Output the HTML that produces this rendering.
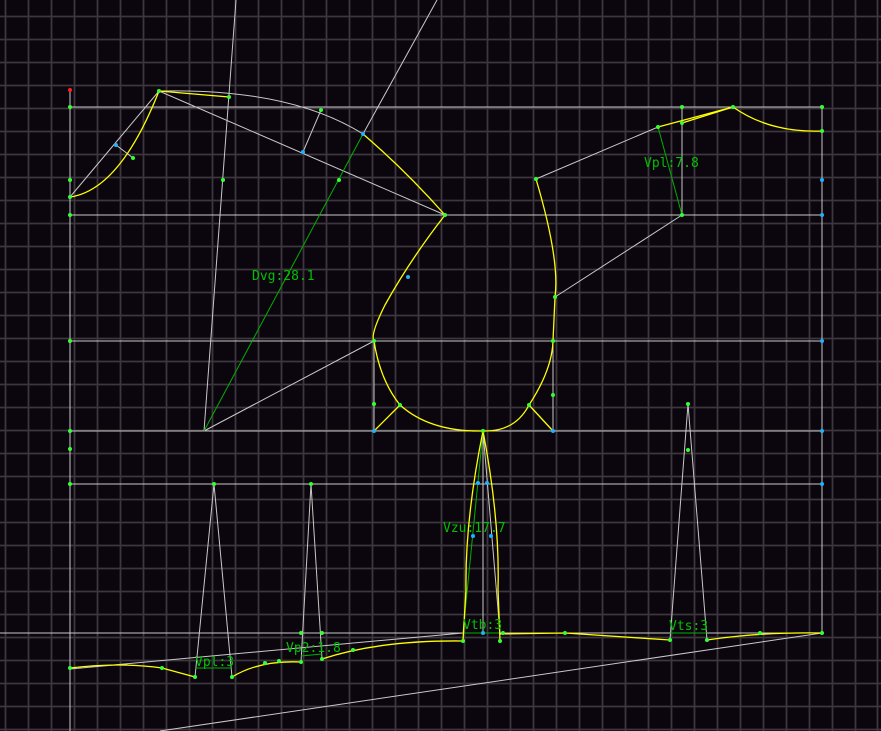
<!DOCTYPE html>
<html><head><meta charset="utf-8"><style>
html,body{margin:0;padding:0;background:#0b060e;}
svg{display:block}
text{font-family:"DejaVu Sans Mono","Liberation Mono",monospace;font-size:13px;fill:#00c000;}
</style></head><body>
<svg width="881" height="731" viewBox="0 0 881 731" xmlns="http://www.w3.org/2000/svg">
<rect width="881" height="731" fill="#0b060e"/>
<g id="grid" stroke="#3d363c" stroke-width="1.8"></g>
<g fill="none" stroke="#c8c8c8" stroke-width="1">
<line x1="70" y1="90" x2="70" y2="731"/>
<line x1="70" y1="107" x2="822" y2="107"/>
<line x1="70" y1="215" x2="822" y2="215"/>
<line x1="70" y1="341" x2="822" y2="341"/>
<line x1="70" y1="431" x2="822" y2="431"/>
<line x1="70" y1="484" x2="822" y2="484"/>
<line x1="0" y1="633" x2="822" y2="633"/>
<line x1="822" y1="107" x2="822" y2="633"/>
<line x1="236" y1="0" x2="204" y2="431"/>
<line x1="437" y1="0" x2="363" y2="134"/>
<line x1="70" y1="197" x2="159" y2="91"/>
<line x1="159" y1="91" x2="445" y2="215"/>
<line x1="204" y1="431" x2="374" y2="341"/>
<path d="M159,91 Q290,88 363,134"/>
<line x1="303" y1="152" x2="321" y2="110"/>
<line x1="116" y1="145" x2="133" y2="158"/>
<line x1="536" y1="179" x2="658" y2="127"/>
<line x1="682" y1="107" x2="682" y2="215"/>
<line x1="682" y1="215" x2="555" y2="297"/>
<line x1="374" y1="341" x2="374" y2="431"/>
<line x1="553" y1="341" x2="553" y2="431"/>
<line x1="214" y1="484" x2="195" y2="677"/>
<line x1="214" y1="484" x2="232" y2="677"/>
<line x1="311" y1="484" x2="301" y2="662"/>
<line x1="311" y1="484" x2="322" y2="659"/>
<line x1="483" y1="431" x2="483" y2="633"/>
<line x1="483" y1="431" x2="500" y2="633"/>
<line x1="688" y1="404" x2="670" y2="640"/>
<line x1="688" y1="404" x2="707" y2="640"/>
<line x1="160" y1="731" x2="822" y2="633"/>
<line x1="70" y1="669" x2="463" y2="633"/>
</g>
<g fill="none" stroke="#00b000" stroke-width="1">
<line x1="363" y1="134" x2="204" y2="431"/>
<line x1="658" y1="127" x2="682" y2="215"/>
<line x1="483" y1="431" x2="463" y2="633"/>
<line x1="195" y1="668" x2="232" y2="668"/>
<line x1="301" y1="656" x2="322" y2="654"/>
<line x1="463" y1="633" x2="500" y2="633"/>
<line x1="670" y1="633" x2="707" y2="633"/>
</g>
<g fill="none" stroke="#ffff00" stroke-width="1.3">
<path d="M70,197 Q120,190 159,91"/>
<line x1="159" y1="91" x2="229" y2="97"/>
<path d="M363,134 Q405,170 445,215"/>
<path d="M445,215 Q410,260 385,305 Q370,335 374,341"/>
<path d="M374,341 Q380,380 400,405 Q430,432 483,431 Q515,432 529,405 Q552,370 553,341"/>
<path d="M536,179 Q560,260 555,297 L553,341"/>
<line x1="374" y1="431" x2="400" y2="405"/>
<line x1="553" y1="431" x2="529" y2="405"/>
<line x1="658" y1="127" x2="733" y2="107"/>
<line x1="682" y1="123" x2="733" y2="107"/>
<path d="M733,107 Q770,133 822,131"/>
<path d="M483,431 Q465,520 466,589 L463,641"/>
<path d="M483,431 Q500,520 498,589 L500,641"/>
<path d="M70,668 Q120,662 162,668 L195,677"/>
<path d="M232,677 Q260,660 301,662"/>
<path d="M322,659 Q380,640 463,641"/>
<path d="M500,634 L565,633 L670,640"/>
<path d="M707,640 Q760,632 822,633"/>
</g>
<g fill="#33ff33">
<circle cx="70" cy="107" r="2"/><circle cx="70" cy="180" r="2"/><circle cx="70" cy="197" r="2"/><circle cx="70" cy="215" r="2"/>
<circle cx="70" cy="341" r="2"/><circle cx="70" cy="431" r="2"/><circle cx="70" cy="449" r="2"/><circle cx="70" cy="484" r="2"/><circle cx="70" cy="668" r="2"/>
<circle cx="159" cy="91" r="2"/><circle cx="229" cy="97" r="2"/><circle cx="223" cy="180" r="2"/><circle cx="321" cy="110" r="2"/><circle cx="133" cy="158" r="2"/>
<circle cx="339" cy="180" r="2"/><circle cx="445" cy="215" r="2"/><circle cx="374" cy="341" r="2"/><circle cx="374" cy="404" r="2"/><circle cx="400" cy="405" r="2"/>
<circle cx="483" cy="431" r="2"/><circle cx="529" cy="405" r="2"/><circle cx="553" cy="341" r="2"/><circle cx="553" cy="395" r="2"/><circle cx="536" cy="179" r="2"/><circle cx="555" cy="297" r="2"/>
<circle cx="658" cy="127" r="2"/><circle cx="682" cy="107" r="2"/><circle cx="682" cy="123" r="2"/><circle cx="682" cy="215" r="2"/><circle cx="733" cy="107" r="2"/><circle cx="822" cy="107" r="2"/><circle cx="822" cy="131" r="2"/>
<circle cx="214" cy="484" r="2"/><circle cx="311" cy="484" r="2"/><circle cx="688" cy="404" r="2"/><circle cx="688" cy="450" r="2"/>
<circle cx="195" cy="677" r="2"/><circle cx="232" cy="677" r="2"/><circle cx="162" cy="668" r="2"/><circle cx="265" cy="663" r="2"/><circle cx="279" cy="661" r="2"/><circle cx="301" cy="662" r="2"/><circle cx="301" cy="633" r="2"/><circle cx="322" cy="633" r="2"/><circle cx="322" cy="659" r="2"/><circle cx="353" cy="650" r="2"/>
<circle cx="463" cy="641" r="2"/><circle cx="500" cy="641" r="2"/><circle cx="503" cy="633" r="2"/><circle cx="565" cy="633" r="2"/><circle cx="670" cy="640" r="2"/><circle cx="707" cy="640" r="2"/><circle cx="760" cy="633" r="2"/><circle cx="822" cy="633" r="2"/>
</g>
<circle cx="70" cy="90" r="2" fill="#ff2020"/>
<g fill="#20b0ff">
<circle cx="116" cy="145" r="2"/><circle cx="303" cy="152" r="2"/><circle cx="363" cy="134" r="2"/><circle cx="408" cy="277" r="2"/><circle cx="822" cy="180" r="2"/><circle cx="822" cy="215" r="2"/><circle cx="822" cy="341" r="2"/><circle cx="822" cy="431" r="2"/><circle cx="822" cy="484" r="2"/><circle cx="374" cy="431" r="2"/><circle cx="553" cy="431" r="2"/>
<circle cx="478" cy="483" r="2"/><circle cx="487" cy="483" r="2"/><circle cx="473" cy="536" r="2"/><circle cx="491" cy="536" r="2"/><circle cx="483" cy="633" r="2"/>
</g>
<text x="252" y="280">Dvg:28.1</text>
<text x="644" y="167">Vpl:7.8</text>
<text x="443" y="532">Vzu:17.7</text>
<text x="463" y="629">Vtb:3</text>
<text x="669" y="630">Vts:3</text>
<text x="195" y="666">Vpl:3</text>
<text x="286" y="652">Vp2:1.8</text>
</svg>
<script>
var g=document.getElementById('grid'),s='';
for(var x=5;x<881;x+=22.96){var X=Math.round(x)+0.5;s+='<line x1="'+X+'" y1="0" x2="'+X+'" y2="731"/>';}
for(var y=16;y<731;y+=23){s+='<line x1="0" y1="'+(y+0.5)+'" x2="881" y2="'+(y+0.5)+'"/>';}
g.innerHTML=s;
</script>
</body></html>
